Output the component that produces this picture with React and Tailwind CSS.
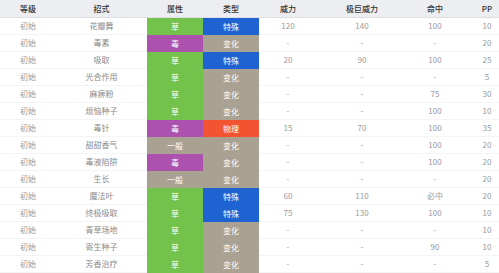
import React from "react";

const C = {
  grass: "bg-[#72c24c]",
  poison: "bg-[#ac52ae]",
  normal: "bg-[#a9a192]",
  special: "bg-[#1f62d2]",
  status: "bg-[#a9a192]",
  physical: "bg-[#f25431]",
};

const rows = [
  ["初始", "花瓣舞", "草", "grass", "特殊", "special", "120", "140", "100", "10"],
  ["初始", "毒素", "毒", "poison", "变化", "status", "-", "-", "-", "20"],
  ["初始", "吸取", "草", "grass", "特殊", "special", "20", "90", "100", "25"],
  ["初始", "光合作用", "草", "grass", "变化", "status", "-", "-", "-", "5"],
  ["初始", "麻痹粉", "草", "grass", "变化", "status", "-", "-", "75", "30"],
  ["初始", "烦恼种子", "草", "grass", "变化", "status", "-", "-", "100", "10"],
  ["初始", "毒针", "毒", "poison", "物理", "physical", "15", "70", "100", "35"],
  ["初始", "甜甜香气", "一般", "normal", "变化", "status", "-", "-", "100", "20"],
  ["初始", "毒液陷阱", "毒", "poison", "变化", "status", "-", "-", "100", "20"],
  ["初始", "生长", "一般", "normal", "变化", "status", "-", "-", "-", "20"],
  ["初始", "魔法叶", "草", "grass", "特殊", "special", "60", "110", "必中", "20"],
  ["初始", "终极吸取", "草", "grass", "特殊", "special", "75", "130", "100", "10"],
  ["初始", "青草场地", "草", "grass", "变化", "status", "-", "-", "-", "10"],
  ["初始", "寄生种子", "草", "grass", "变化", "status", "-", "-", "90", "10"],
  ["初始", "芳香治疗", "草", "grass", "变化", "status", "-", "-", "-", "5"],
];

const headers = ["等级", "招式", "属性", "类型", "威力", "极巨威力", "命中", "PP"];
const grid = "grid grid-cols-[56px_91px_56px_56px_58px_90px_56px_48px]";

export default function App() {
  return (
    <div
      className="w-[499px] h-[273px] overflow-hidden bg-white"
      style={{ fontFamily: '"Noto Sans CJK SC", "Noto Sans", sans-serif' }}
    >
      <div className="w-[511px]">
        <div className={`${grid} h-[18px] bg-[#eceef1] border-b border-[#dcdfe4]`}>
          {headers.map((h) => (
            <div key={h} className="flex items-center justify-center text-[8px] text-[#333] font-medium leading-none">
              {h}
            </div>
          ))}
        </div>
        {rows.map((r, i) => (
          <div key={i} className={`${grid} h-[17px] text-[8px] leading-none`}>
            <div className="flex items-center justify-center text-[#9a9a9a] border-b border-[#f4f4f4]">{r[0]}</div>
            <div className="flex items-center justify-center text-[#8a8a8a] border-b border-[#f4f4f4]">{r[1]}</div>
            <div className={`flex items-center justify-center text-white ${C[r[3]]}`}>{r[2]}</div>
            <div className={`flex items-center justify-center text-white ${C[r[5]]}`}>{r[4]}</div>
            <div className="flex items-center justify-center text-[#9a9a9a] border-b border-[#f4f4f4]">{r[6]}</div>
            <div className="flex items-center justify-center text-[#9a9a9a] border-b border-[#f4f4f4]">{r[7]}</div>
            <div className="flex items-center justify-center text-[#9a9a9a] border-b border-[#f4f4f4]">{r[8]}</div>
            <div className="flex items-center justify-center text-[#9a9a9a] border-b border-[#f4f4f4]">{r[9]}</div>
          </div>
        ))}
      </div>
    </div>
  );
}
